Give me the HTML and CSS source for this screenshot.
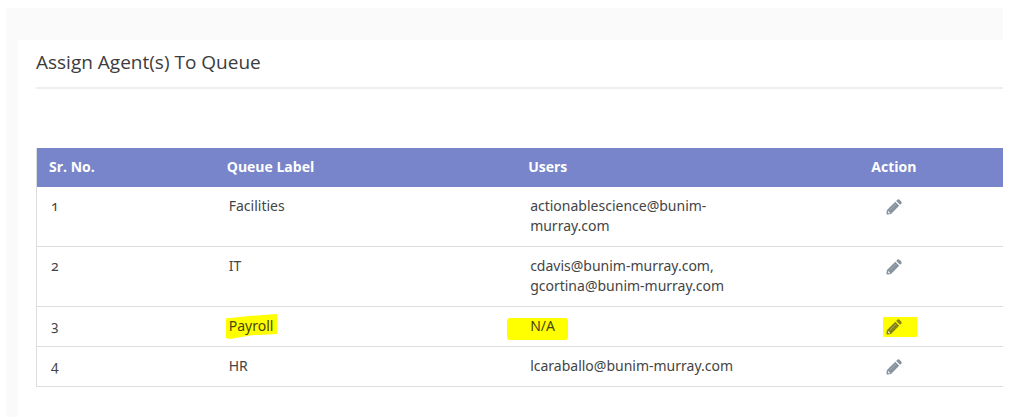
FILE: index.html
```html
<!DOCTYPE html>
<html lang="en">
<head>
    <meta charset="UTF-8">
    <meta name="viewport" content="width=device-width, initial-scale=1.0">
    <title>Assign Agent(s) To Queue</title>
    <link rel="stylesheet" href="styles.css">
</head>
<body>
    <svg class="icon-defs" aria-hidden="true">
        <symbol id="pencil" viewBox="0 0 16 16">
            <path d="M1 11 9.3 2.8l3.900 3.900L5 14.900 1.800 15.600Q.3 15.700.4 14.200z"/>
            <path d="M10.200 1.900 11.600.6q.8-.6 1.600 0l2.200 2.200q.6.800 0 1.600l-1.300 1.400z"/>
            <path class="pencil-tip" d="M2.300 12l1.900 1.900-1.100.5-1.200-1.200z"/>
            <path class="pencil-shine" d="M4 11 10 5"/>
        </symbol>
    </svg>

    <main class="page">
        <section class="card">
            <h1>Assign Agent(s) To Queue</h1>

            <table class="queue-table">
                <thead>
                    <tr>
                        <th class="col-no">Sr. No.</th>
                        <th class="col-label">Queue Label</th>
                        <th class="col-users">Users</th>
                        <th class="col-action">Action</th>
                    </tr>
                </thead>
                <tbody>
                    <tr>
                        <td>1</td>
                        <td>Facilities</td>
                        <td>actionablescience@bunim-murray.com</td>
                        <td class="col-action"><button type="button" aria-label="Edit Facilities"><svg><use href="#pencil"/></svg></button></td>
                    </tr>
                    <tr>
                        <td>2</td>
                        <td>IT</td>
                        <td>cdavis@bunim-murray.com, gcortina@bunim-murray.com</td>
                        <td class="col-action"><button type="button" aria-label="Edit IT"><svg><use href="#pencil"/></svg></button></td>
                    </tr>
                    <tr>
                        <td>3</td>
                        <td><span class="mark mark-label">Payroll</span></td>
                        <td><span class="mark mark-users">N/A</span></td>
                        <td class="col-action"><button type="button" class="mark mark-action" aria-label="Edit Payroll"><svg><use href="#pencil"/></svg></button></td>
                    </tr>
                    <tr>
                        <td>4</td>
                        <td>HR</td>
                        <td>lcaraballo@bunim-murray.com</td>
                        <td class="col-action"><button type="button" aria-label="Edit HR"><svg><use href="#pencil"/></svg></button></td>
                    </tr>
                </tbody>
            </table>
        </section>
    </main>
</body>
</html>
```

FILE: styles.css
```css
* {
    box-sizing: border-box;
}

body {
    display: flex;
    min-height: 100vh;
    margin: 0;
    padding: 8px 21px 0 6px;
    background: #fff;
    color: #444;
    font-family: "Noto Sans", "Open Sans", sans-serif;
    font-size: 14px;
    line-height: 20px;
    font-variant-numeric: oldstyle-nums;
}

.icon-defs {
    display: none;
}

.page {
    display: flex;
    flex: 1;
    padding: 32px 0 0 12px;
    background: #fafafa;
}

.card {
    flex: 1;
    padding: 0 0 24px 18px;
    background: #fff;
}

h1 {
    margin: 0 0 59px;
    padding: 10px 0 12px;
    border-bottom: 2px solid #eee;
    color: #3c3c3c;
    font-family: "Open Sans", "Noto Sans", sans-serif;
    font-size: 19px;
    font-weight: 400;
    line-height: 25px;
}

.queue-table {
    width: 100%;
    table-layout: fixed;
    border-spacing: 0;
    border-left: 1px solid #ddd;
}

th {
    height: 39px;
    padding: 0 12px 2px;
    background: #7885cb;
    color: #fff;
    font-family: "Open Sans", "Noto Sans", sans-serif;
    font-weight: 700;
    text-align: left;
}

td {
    padding: 9px 14px 10px;
    border-bottom: 1px solid #ddd;
    vertical-align: top;
}

.col-no {
    width: 18.4%;
}

.col-label {
    width: 31.2%;
}

.col-users {
    width: 27.8%;
}

.col-action {
    text-align: center;
}

button {
    padding: 0;
    border: 0;
    background: none;
    color: #8794a0;
    vertical-align: top;
    cursor: pointer;
}

button svg {
    display: block;
    width: 16px;
    height: 16px;
    margin: 3px 0 1px;
    fill: currentColor;
}

.pencil-tip {
    fill: #fff;
}

.pencil-shine {
    fill: none;
    stroke: #b4bdc4;
    stroke-opacity: 0.6;
}

/* highlighter strokes behind the unassigned queue */
.mark {
    position: relative;
    z-index: 0;
}

.mark::before {
    content: "";
    position: absolute;
    z-index: -1;
    background: #ff0;
}

.mark-label {
    color: #4a4610;
}

.mark-label::before {
    inset: -2px -4px -4px -3px;
    clip-path: polygon(0 18%, 45% 8%, 100% 0, 100% 80%, 50% 85%, 8% 100%, 0 96%);
}

.mark-users {
    color: #4a4610;
}

.mark-users::before {
    inset: 2px -13px -5px -23px;
    border-radius: 3px;
}

.mark-action {
    color: #85850f;
}

.mark-action::before {
    inset: 1px -15px -1px -3px;
    border-radius: 1px;
}

.mark-action .pencil-tip {
    fill: #ff0;
}

.mark-action .pencil-shine {
    stroke: #a8a800;
}
```
